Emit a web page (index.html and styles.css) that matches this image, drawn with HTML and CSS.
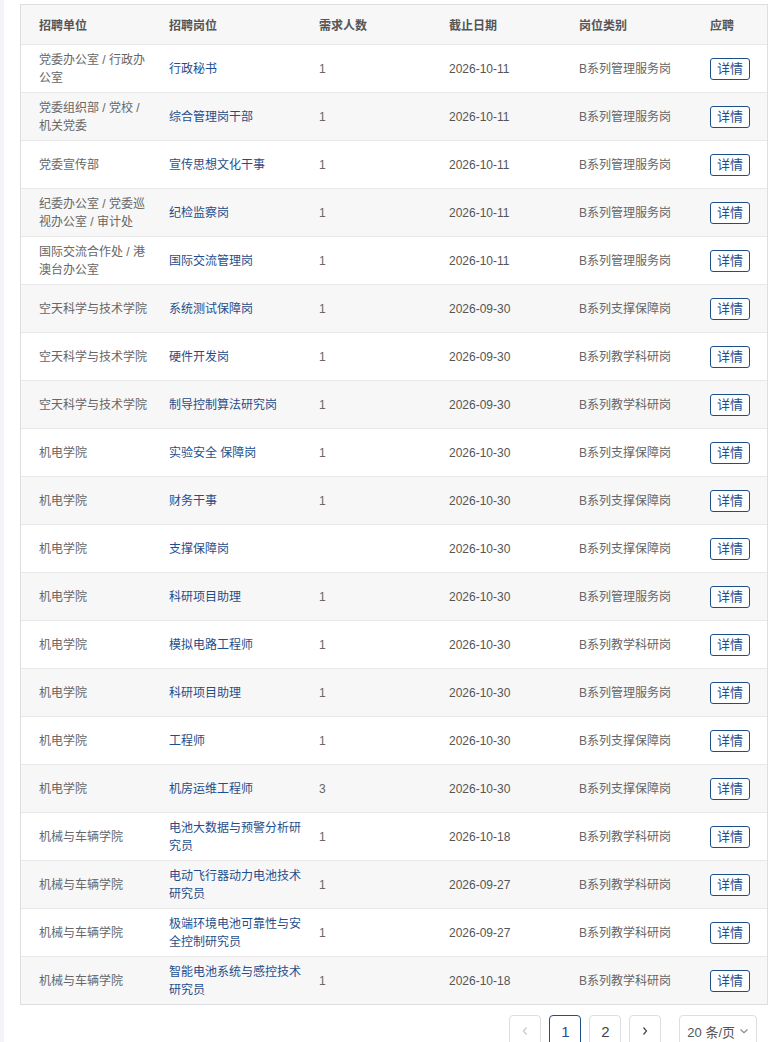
FILE: index.html
```html
<!DOCTYPE html>
<html lang="zh-CN">
<head>
<meta charset="utf-8">
<title>招聘岗位</title>
<link rel="stylesheet" href="styles.css">
</head>
<body>
<div class="page">
  <table class="jobs">
    <colgroup>
      <col class="c1"><col class="c2"><col class="c3"><col class="c4"><col class="c5"><col class="c6">
    </colgroup>
    <thead>
      <tr><th>招聘单位</th><th>招聘岗位</th><th>需求人数</th><th>截止日期</th><th>岗位类别</th><th>应聘</th></tr>
    </thead>
    <tbody>
      <tr><td class="unit">党委办公室 / 行政办公室</td><td class="post">行政秘书</td><td class="num">1</td><td class="date">2026-10-11</td><td class="cat">B系列管理服务岗</td><td><a class="btn">详情</a></td></tr>
      <tr><td class="unit">党委组织部 / 党校 / 机关党委</td><td class="post">综合管理岗干部</td><td class="num">1</td><td class="date">2026-10-11</td><td class="cat">B系列管理服务岗</td><td><a class="btn">详情</a></td></tr>
      <tr><td class="unit">党委宣传部</td><td class="post">宣传思想文化干事</td><td class="num">1</td><td class="date">2026-10-11</td><td class="cat">B系列管理服务岗</td><td><a class="btn">详情</a></td></tr>
      <tr><td class="unit">纪委办公室 / 党委巡视办公室 / 审计处</td><td class="post">纪检监察岗</td><td class="num">1</td><td class="date">2026-10-11</td><td class="cat">B系列管理服务岗</td><td><a class="btn">详情</a></td></tr>
      <tr><td class="unit">国际交流合作处 / 港澳台办公室</td><td class="post">国际交流管理岗</td><td class="num">1</td><td class="date">2026-10-11</td><td class="cat">B系列管理服务岗</td><td><a class="btn">详情</a></td></tr>
      <tr><td class="unit">空天科学与技术学院</td><td class="post">系统测试保障岗</td><td class="num">1</td><td class="date">2026-09-30</td><td class="cat">B系列支撑保障岗</td><td><a class="btn">详情</a></td></tr>
      <tr><td class="unit">空天科学与技术学院</td><td class="post">硬件开发岗</td><td class="num">1</td><td class="date">2026-09-30</td><td class="cat">B系列教学科研岗</td><td><a class="btn">详情</a></td></tr>
      <tr><td class="unit">空天科学与技术学院</td><td class="post">制导控制算法研究岗</td><td class="num">1</td><td class="date">2026-09-30</td><td class="cat">B系列教学科研岗</td><td><a class="btn">详情</a></td></tr>
      <tr><td class="unit">机电学院</td><td class="post">实验安全 保障岗</td><td class="num">1</td><td class="date">2026-10-30</td><td class="cat">B系列支撑保障岗</td><td><a class="btn">详情</a></td></tr>
      <tr><td class="unit">机电学院</td><td class="post">财务干事</td><td class="num">1</td><td class="date">2026-10-30</td><td class="cat">B系列支撑保障岗</td><td><a class="btn">详情</a></td></tr>
      <tr><td class="unit">机电学院</td><td class="post">支撑保障岗</td><td class="num"></td><td class="date">2026-10-30</td><td class="cat">B系列支撑保障岗</td><td><a class="btn">详情</a></td></tr>
      <tr><td class="unit">机电学院</td><td class="post">科研项目助理</td><td class="num">1</td><td class="date">2026-10-30</td><td class="cat">B系列管理服务岗</td><td><a class="btn">详情</a></td></tr>
      <tr><td class="unit">机电学院</td><td class="post">模拟电路工程师</td><td class="num">1</td><td class="date">2026-10-30</td><td class="cat">B系列教学科研岗</td><td><a class="btn">详情</a></td></tr>
      <tr><td class="unit">机电学院</td><td class="post">科研项目助理</td><td class="num">1</td><td class="date">2026-10-30</td><td class="cat">B系列管理服务岗</td><td><a class="btn">详情</a></td></tr>
      <tr><td class="unit">机电学院</td><td class="post">工程师</td><td class="num">1</td><td class="date">2026-10-30</td><td class="cat">B系列支撑保障岗</td><td><a class="btn">详情</a></td></tr>
      <tr><td class="unit">机电学院</td><td class="post">机房运维工程师</td><td class="num">3</td><td class="date">2026-10-30</td><td class="cat">B系列支撑保障岗</td><td><a class="btn">详情</a></td></tr>
      <tr><td class="unit">机械与车辆学院</td><td class="post">电池大数据与预警分析研究员</td><td class="num">1</td><td class="date">2026-10-18</td><td class="cat">B系列教学科研岗</td><td><a class="btn">详情</a></td></tr>
      <tr><td class="unit">机械与车辆学院</td><td class="post">电动飞行器动力电池技术研究员</td><td class="num">1</td><td class="date">2026-09-27</td><td class="cat">B系列教学科研岗</td><td><a class="btn">详情</a></td></tr>
      <tr><td class="unit">机械与车辆学院</td><td class="post">极端环境电池可靠性与安全控制研究员</td><td class="num">1</td><td class="date">2026-09-27</td><td class="cat">B系列教学科研岗</td><td><a class="btn">详情</a></td></tr>
      <tr><td class="unit">机械与车辆学院</td><td class="post">智能电池系统与感控技术研究员</td><td class="num">1</td><td class="date">2026-10-18</td><td class="cat">B系列教学科研岗</td><td><a class="btn">详情</a></td></tr>
    </tbody>
  </table>
  <div class="pager">
    <span class="pg disabled"><svg width="8" height="10" viewBox="0 0 8 10"><path d="M5.5 1.5 L2.5 5 L5.5 8.5" fill="none" stroke="currentColor" stroke-width="1.2"/></svg></span>
    <span class="pg active">1</span>
    <span class="pg">2</span>
    <span class="pg"><svg width="8" height="10" viewBox="0 0 8 10"><path d="M2.5 1.5 L5.5 5 L2.5 8.5" fill="none" stroke="currentColor" stroke-width="1.2"/></svg></span>
    <span class="size">20 条/页 <svg width="10" height="8" viewBox="0 0 10 8"><path d="M1.5 2.5 L5 5.8 L8.5 2.5" fill="none" stroke="currentColor" stroke-width="1.2"/></svg></span>
  </div>
</div>
</body>
</html>
```
FILE: styles.css
```css
html, body {
  margin: 0;
  padding: 0;
  background: #fff;
}
body {
  font-family: "Liberation Sans", "Noto Sans CJK SC", sans-serif;
  font-size: 12px;
  color: #666;
}
.page {
  border-left: 4px solid #f3f4f7;
  padding: 4px 16px 0 16px;
  min-height: 1042px;
  box-sizing: border-box;
}
.jobs {
  width: 100%;
  table-layout: fixed;
  border-collapse: separate;
  border-spacing: 0;
  border: 1px solid #dcdee2;
}
.c1 { width: 130px; }
.c2 { width: 150px; }
.c3 { width: 130px; }
.c4 { width: 130px; }
.c5 { width: 131px; }
.c6 { width: auto; }
.jobs th {
  height: 39px;
  padding: 0 0 0 18px;
  text-align: left;
  font-weight: bold;
  color: #555;
  background: #f7f7f7;
  font-size: 12px;
}
.jobs td {
  height: 46px;
  padding: 1px 0 0 18px;
  border-top: 1px solid #e8e8e8;
  line-height: 18px;
  vertical-align: middle;
  word-break: break-all;
}
.jobs tbody tr:nth-child(even) td {
  background: #f7f7f7;
}
.jobs td.unit { color: #666; }
.jobs td.post { color: #1f4e8c; }
.jobs td.num { color: #666; }
.jobs td.date { color: #555; }
.jobs td.cat { color: #666; }
.btn {
  display: inline-flex;
  align-items: center;
  justify-content: center;
  width: 38px;
  height: 20px;
  border: 1px solid #1f4e8c;
  border-radius: 3px;
  color: #1f4e8c;
  font-size: 13px;
  background: #fff;
}
.pager {
  display: flex;
  justify-content: flex-end;
  align-items: center;
  gap: 8px;
  margin-top: 10px;
  padding-right: 11px;
}
.pg {
  display: inline-flex;
  align-items: center;
  justify-content: center;
  width: 30px;
  height: 30px;
  border: 1px solid #dcdee2;
  border-radius: 4px;
  color: #444;
  font-size: 15px;
  background: #fff;
}
.pg.disabled { color: #c5c8ce; }
.pg.active { border-color: #1f4e8c; color: #1f4e8c; }
.size {
  display: inline-flex;
  align-items: center;
  gap: 4px;
  height: 30px;
  padding: 0 7px;
  margin-left: 10px;
  border: 1px solid #dcdee2;
  border-radius: 4px;
  color: #555;
  font-size: 13px;
}
.size svg { color: #888; }
```
